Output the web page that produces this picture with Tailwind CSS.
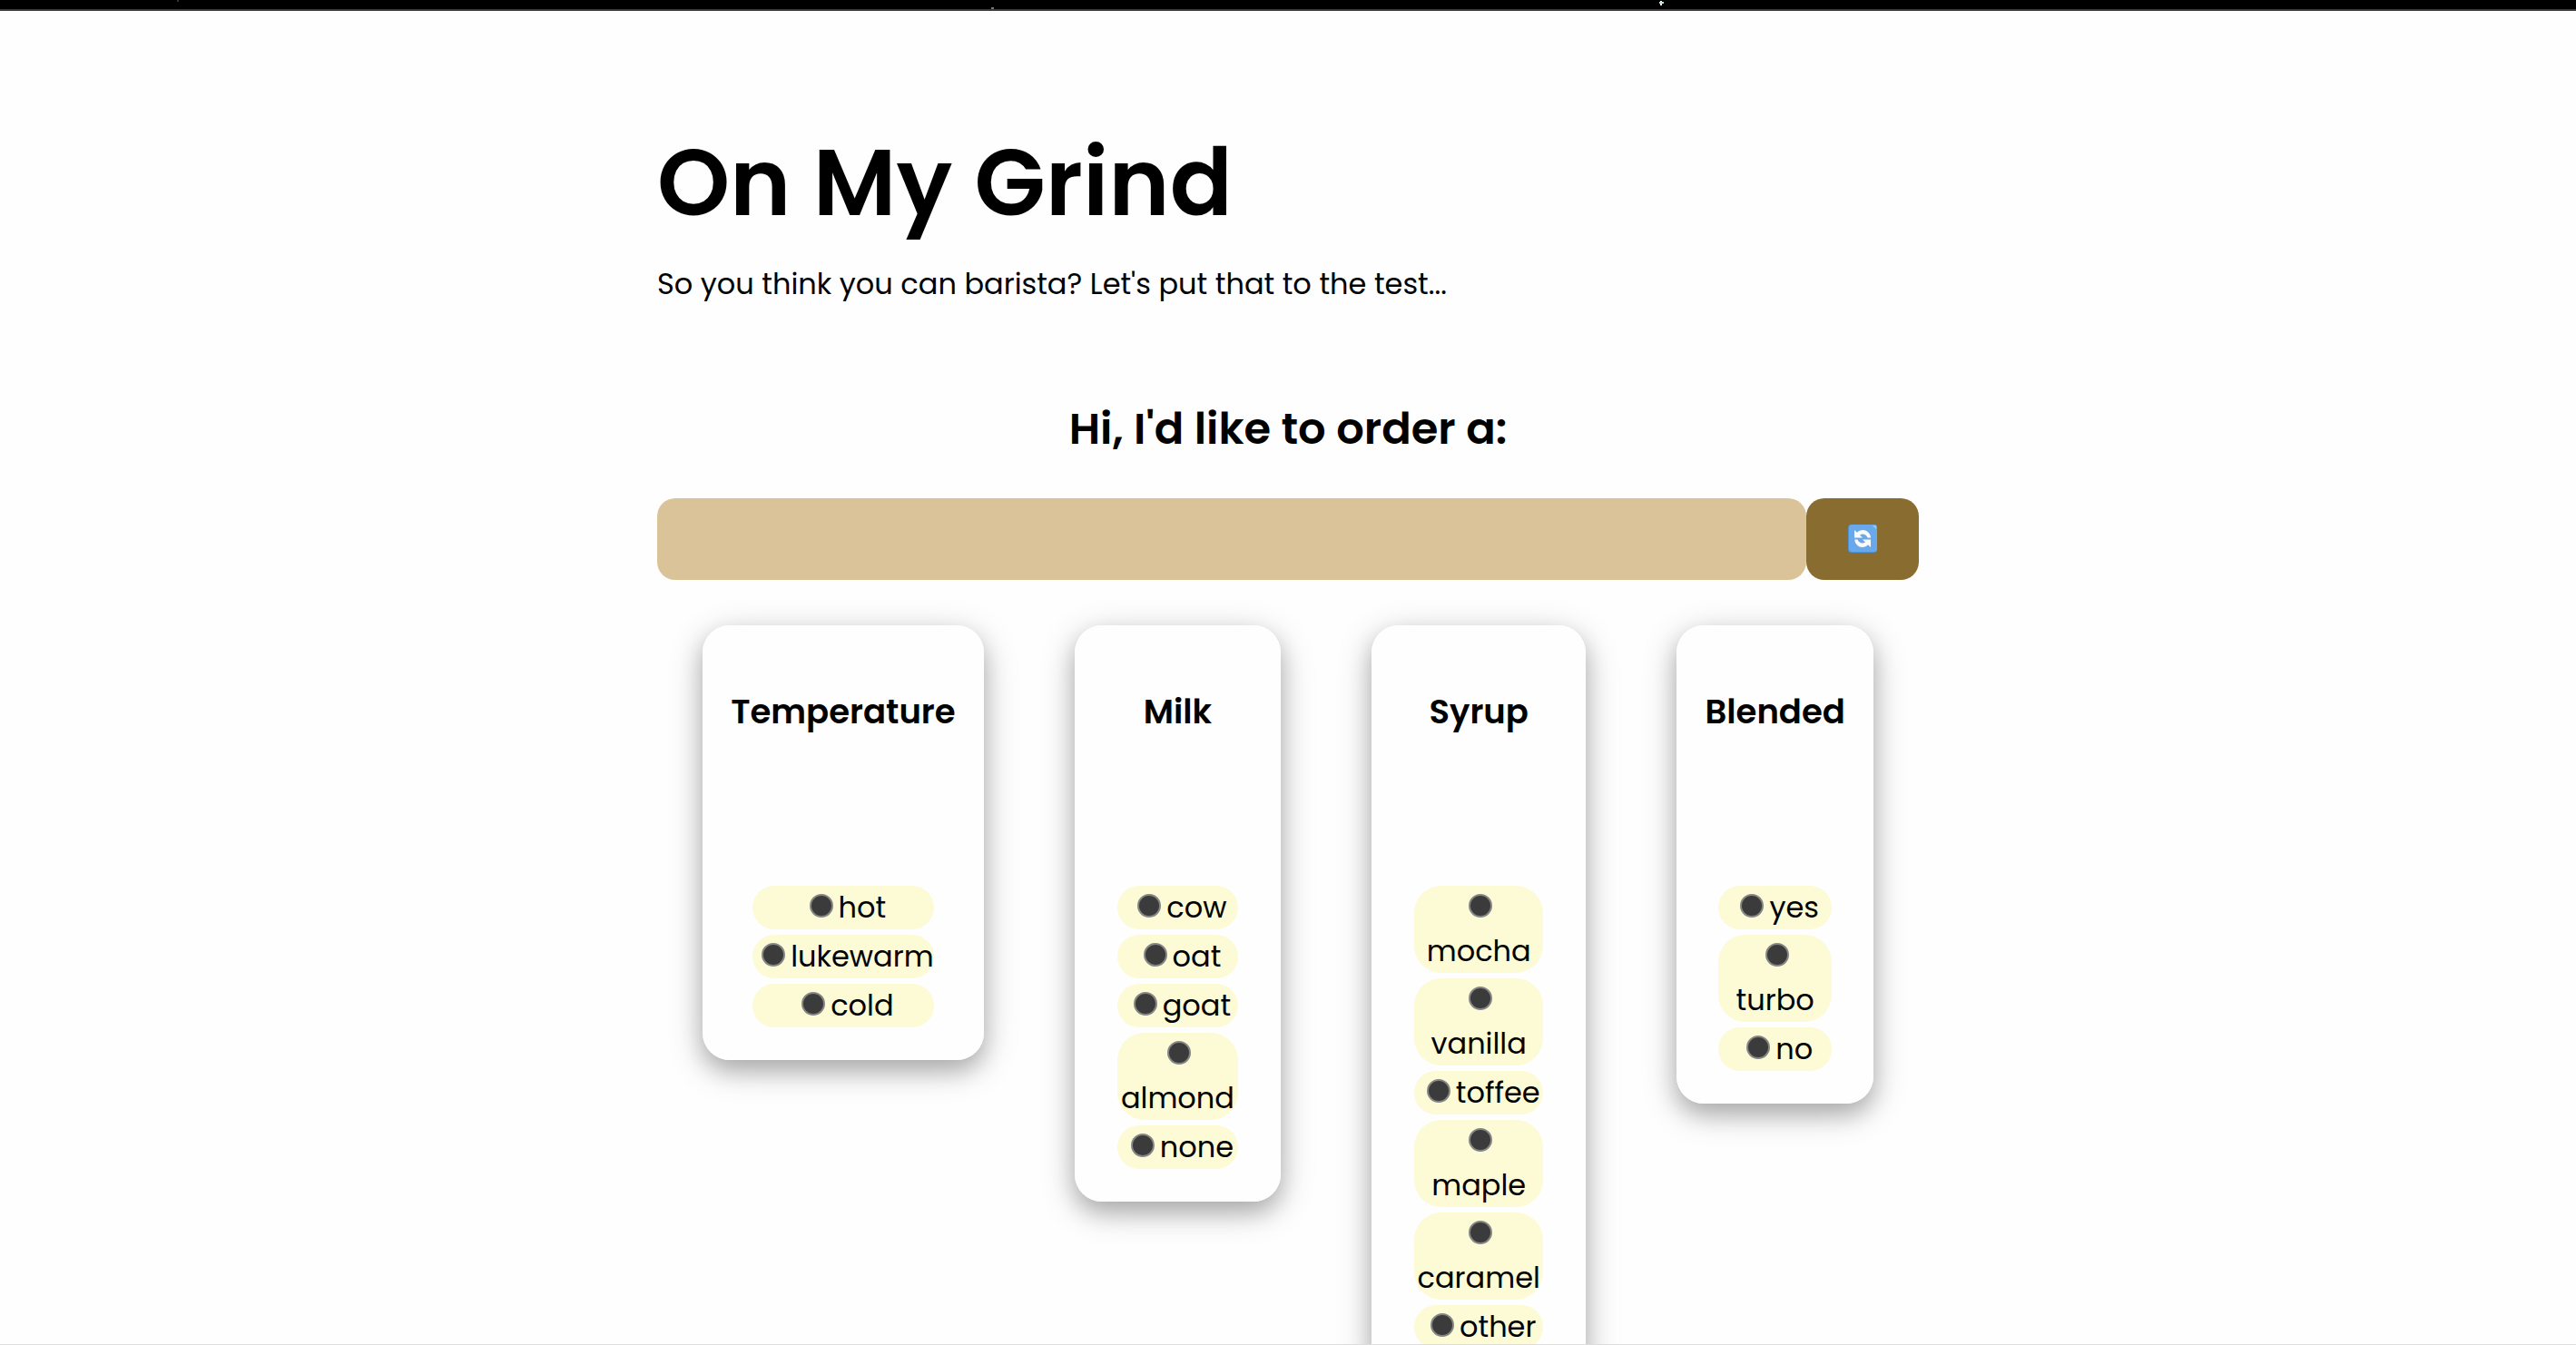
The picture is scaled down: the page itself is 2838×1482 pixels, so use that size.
<!DOCTYPE html>
<html lang="en">
<head>
<meta charset="utf-8">
<meta name="viewport" content="width=device-width, initial-scale=1">
<title>On My Grind</title>
<script src="https://cdn.jsdelivr.net/npm/@tailwindcss/browser@4"></script>
</head>
<body class="h-screen overflow-hidden border-b border-[#dcdcdc] bg-[#fefefe] font-['Poppins','Inter',sans-serif] text-[32px] leading-[48px] text-black">
  <!-- Bottom edge of the starry header -->
  <header class="h-3 border-b-2 border-[#3b3637] bg-black">
    <svg class="h-full w-full" aria-hidden="true">
      <rect x="1829" y="1" width="2" height="5" fill="#fff"/>
      <rect x="1828" y="2" width="5" height="2" fill="#bdd"/>
      <rect x="1092" y="8" width="3" height="2" fill="#777"/>
      <rect x="195" y="0" width="2" height="2" fill="#333"/>
    </svg>
  </header>

  <main class="mx-auto max-w-[1390px] pt-[113px]">
    <h1 class="text-[102px] leading-[153px] font-semibold">On My Grind</h1>
    <p class="mt-[11px]">So you think you can barista? Let's put that to the test...</p>

    <h2 class="mt-[100px] text-center text-[48px] leading-[72px] font-semibold">Hi, I'd like to order a:</h2>
    <div class="mt-10 flex h-[90px]">
      <output class="flex-1 rounded-[20px] bg-[#dac398]" aria-label="Order"></output>
      <button type="button" class="flex w-[124px] items-center justify-center rounded-[20px] bg-[#896c2f]" aria-label="New order">
        <svg class="size-8" viewBox="0 0 32 32" aria-hidden="true">
          <rect width="32" height="31" rx="4" fill="#4a93d8"/>
          <rect x="1" width="31" height="30" rx="3" fill="#69a8ea"/>
          <path d="M27 1h3l1 1v3z" fill="#8fd0f5"/>
          <path d="M7 6v8.500h9l-3-3c3.500-2 7-.5 8.500 3h3.700C24 6 15 3.500 10 8.700z" fill="#fafafa"/>
          <path d="M25 25v-8.500h-9l3 3c-3.500 2-7 .5-8.500-3H7.300C8 25 17 27.500 22 22.300z" fill="#fafafa"/>
        </svg>
      </button>
    </div>

    <form class="mt-[50px] flex items-start justify-around">
      <fieldset class="flex flex-col items-center rounded-[30px] bg-[#fefefe] px-[31px] pt-[67px] pb-9 shadow-[0_10px_40px_rgba(0,0,0,0.2),0_12px_24px_rgba(0,0,0,0.2)]">
        <h3 class="mb-[163px] text-[37px] leading-[57px] font-semibold">Temperature</h3>
        <div class="flex w-[200px] flex-col gap-1.5 text-center">
          <label class="rounded-[24px] bg-[#fdfad6]"><input type="radio" name="temperature" class="mr-1.5 ml-2.5 size-[26px] appearance-none rounded-full border-2 border-[#858585] bg-[#3b3b3b]">hot</label>
          <label class="rounded-[24px] bg-[#fdfad6] whitespace-nowrap"><input type="radio" name="temperature" class="mr-1.5 ml-2.5 size-[26px] appearance-none rounded-full border-2 border-[#858585] bg-[#3b3b3b]">lukewarm</label>
          <label class="rounded-[24px] bg-[#fdfad6]"><input type="radio" name="temperature" class="mr-1.5 ml-2.5 size-[26px] appearance-none rounded-full border-2 border-[#858585] bg-[#3b3b3b]">cold</label>
        </div>
      </fieldset>

      <fieldset class="flex flex-col items-center rounded-[30px] bg-[#fefefe] px-[47px] pt-[67px] pb-9 shadow-[0_10px_40px_rgba(0,0,0,0.2),0_12px_24px_rgba(0,0,0,0.2)]">
        <h3 class="mb-[163px] text-[37px] leading-[57px] font-semibold">Milk</h3>
        <div class="flex w-[133px] flex-col gap-1.5 text-center">
          <label class="rounded-[24px] bg-[#fdfad6]"><input type="radio" name="milk" class="mr-1.5 ml-2.5 size-[26px] appearance-none rounded-full border-2 border-[#858585] bg-[#3b3b3b]">cow</label>
          <label class="rounded-[24px] bg-[#fdfad6]"><input type="radio" name="milk" class="mr-1.5 ml-2.5 size-[26px] appearance-none rounded-full border-2 border-[#858585] bg-[#3b3b3b]">oat</label>
          <label class="rounded-[24px] bg-[#fdfad6]"><input type="radio" name="milk" class="mr-1.5 ml-2.5 size-[26px] appearance-none rounded-full border-2 border-[#858585] bg-[#3b3b3b]">goat</label>
          <label class="rounded-[30px] bg-[#fdfad6]"><input type="radio" name="milk" class="mr-1.5 ml-2.5 size-[26px] appearance-none rounded-full border-2 border-[#858585] bg-[#3b3b3b]">almond</label>
          <label class="rounded-[24px] bg-[#fdfad6]"><input type="radio" name="milk" class="mr-1.5 ml-2.5 size-[26px] appearance-none rounded-full border-2 border-[#858585] bg-[#3b3b3b]">none</label>
        </div>
      </fieldset>

      <fieldset class="flex flex-col items-center rounded-[30px] bg-[#fefefe] px-[47px] pt-[67px] pb-9 shadow-[0_10px_40px_rgba(0,0,0,0.2),0_12px_24px_rgba(0,0,0,0.2)]">
        <h3 class="mb-[163px] text-[37px] leading-[57px] font-semibold">Syrup</h3>
        <div class="flex w-[142px] flex-col gap-1.5 text-center">
          <label class="rounded-[30px] bg-[#fdfad6]"><input type="radio" name="syrup" class="mr-1.5 ml-2.5 size-[26px] appearance-none rounded-full border-2 border-[#858585] bg-[#3b3b3b]">mocha</label>
          <label class="rounded-[30px] bg-[#fdfad6]"><input type="radio" name="syrup" class="mr-1.5 ml-2.5 size-[26px] appearance-none rounded-full border-2 border-[#858585] bg-[#3b3b3b]">vanilla</label>
          <label class="rounded-[24px] bg-[#fdfad6]"><input type="radio" name="syrup" class="mr-1.5 ml-2.5 size-[26px] appearance-none rounded-full border-2 border-[#858585] bg-[#3b3b3b]">toffee</label>
          <label class="rounded-[30px] bg-[#fdfad6]"><input type="radio" name="syrup" class="mr-1.5 ml-2.5 size-[26px] appearance-none rounded-full border-2 border-[#858585] bg-[#3b3b3b]">maple</label>
          <label class="rounded-[30px] bg-[#fdfad6]"><input type="radio" name="syrup" class="mr-1.5 ml-2.5 size-[26px] appearance-none rounded-full border-2 border-[#858585] bg-[#3b3b3b]">caramel</label>
          <label class="rounded-[24px] bg-[#fdfad6]"><input type="radio" name="syrup" class="mr-1.5 ml-2.5 size-[26px] appearance-none rounded-full border-2 border-[#858585] bg-[#3b3b3b]">other</label>
        </div>
      </fieldset>

      <fieldset class="flex flex-col items-center rounded-[30px] bg-[#fefefe] px-[31px] pt-[67px] pb-9 shadow-[0_10px_40px_rgba(0,0,0,0.2),0_12px_24px_rgba(0,0,0,0.2)]">
        <h3 class="mb-[163px] text-[37px] leading-[57px] font-semibold">Blended</h3>
        <div class="flex w-[125px] flex-col gap-1.5 text-center">
          <label class="rounded-[24px] bg-[#fdfad6]"><input type="radio" name="blended" class="mr-1.5 ml-2.5 size-[26px] appearance-none rounded-full border-2 border-[#858585] bg-[#3b3b3b]">yes</label>
          <label class="rounded-[30px] bg-[#fdfad6]"><input type="radio" name="blended" class="mr-1.5 ml-2.5 size-[26px] appearance-none rounded-full border-2 border-[#858585] bg-[#3b3b3b]">turbo</label>
          <label class="rounded-[24px] bg-[#fdfad6]"><input type="radio" name="blended" class="mr-1.5 ml-2.5 size-[26px] appearance-none rounded-full border-2 border-[#858585] bg-[#3b3b3b]">no</label>
        </div>
      </fieldset>
    </form>
  </main>
</body>
</html>
